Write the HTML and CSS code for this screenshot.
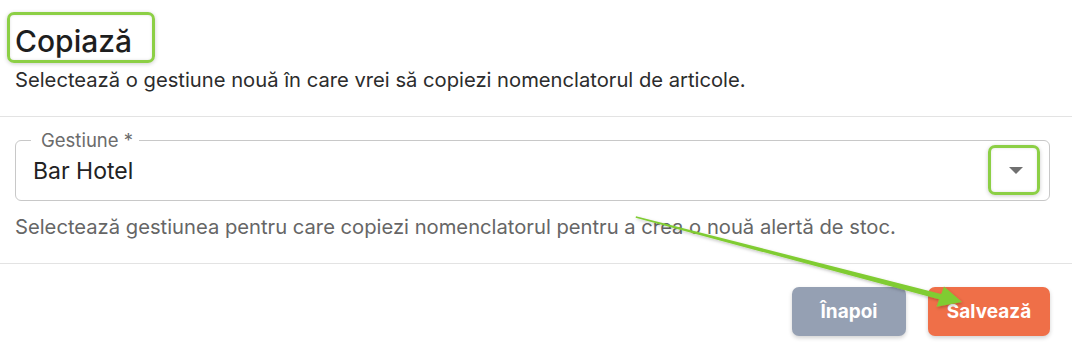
FILE: index.html
```html
<!DOCTYPE html>
<html lang="ro">
<head>
<meta charset="utf-8">
<title>Copiază</title>
<link rel="stylesheet" href="styles.css">
</head>
<body>
<div class="dialog">
  <div class="header">
    <h1 class="title">Copiază</h1>
    <p class="subtitle">Selectează o gestiune nouă în care vrei să copiezi nomenclatorul de articole.</p>
  </div>
  <div class="body">
    <div class="field">
      <span class="label">Gestiune *</span>
      <span class="value">Bar Hotel</span>
      <span class="caret"></span>
    </div>
    <p class="helper">Selectează gestiunea pentru care copiezi nomenclatorul pentru a crea o nouă alertă de stoc.</p>
  </div>
  <div class="footer">
    <button class="btn btn-back">Înapoi</button>
    <button class="btn btn-save">Salvează</button>
  </div>
</div>
<div class="mark mark-title"></div>
<div class="mark mark-caret"></div>
<svg class="arrow" width="1072" height="356" viewBox="0 0 1072 356">
  <defs>
    <filter id="sh" x="-10%" y="-10%" width="120%" height="120%">
      <feDropShadow dx="1" dy="1.5" stdDeviation="1.5" flood-color="#000" flood-opacity="0.25"/>
    </filter>
  </defs>
  <g filter="url(#sh)" fill="#80cc32">
    <polygon points="636,216.2 943,294.4 941.6,300 635.6,217.8"/>
    <polygon points="962,302 936.4,306.8 944,286.4"/>
  </g>
</svg>
</body>
</html>
```
FILE: styles.css
```css
* { box-sizing: border-box; }
html, body { margin: 0; padding: 0; background: #fff; }
body {
  font-family: Inter, "Noto Sans", "Liberation Sans", sans-serif;
  width: 1072px;
  height: 356px;
  overflow: hidden;
  position: relative;
}
.header {
  padding: 22px 22px 24px 15px;
  border-bottom: 1px solid #e3e3e3;
}
.title {
  margin: 0;
  font-size: 30px;
  line-height: 38px;
  font-weight: 500;
  color: #1e1e1e;
}
.subtitle {
  margin: 8px 0 0;
  font-size: 20.2px;
  line-height: 24px;
  color: #2c2c2c;
}
.body {
  padding: 23px 22px 24px 15px;
  border-bottom: 1px solid #e3e3e3;
}
.field {
  position: relative;
  height: 61px;
  border: 1px solid #c8c8c8;
  border-radius: 6px;
  display: flex;
  align-items: center;
  padding: 0 17px;
}
.label {
  position: absolute;
  top: -13px;
  left: 15px;
  padding: 0 6px 0 10px;
  background: #fff;
  font-size: 18.5px;
  line-height: 24px;
  color: #6b6b6b;
}
.value {
  flex: 1;
  font-size: 23px;
  line-height: 28px;
  color: #222;
}
.caret {
  width: 0;
  height: 0;
  border-left: 7px solid transparent;
  border-right: 7px solid transparent;
  border-top: 7px solid #707070;
  margin-right: 9px;
}
.helper {
  margin: 14px 0 0;
  font-size: 20.2px;
  line-height: 24px;
  color: #666;
}
.footer {
  display: flex;
  justify-content: flex-end;
  gap: 22px;
  padding: 23px 22px 0 15px;
}
.btn {
  height: 49px;
  border: none;
  border-radius: 7px;
  font-family: Inter, "Noto Sans", "Liberation Sans", sans-serif;
  font-size: 19px;
  font-weight: 700;
  color: #fff;
  padding: 0;
  text-align: center;
  box-shadow: 0 2px 4px rgba(0,0,0,0.18);
}
.btn-back { background: #95a0b3; width: 114px; }
.btn-save { background: #ef6f48; width: 122px; }
.mark {
  position: absolute;
  border: 3.5px solid #8ccf45;
  border-radius: 7px;
  box-shadow: 0 1px 4px rgba(0,0,0,0.2), inset 0 0 3px rgba(0,0,0,0.12);
}
.mark-title { left: 7px; top: 12px; width: 148px; height: 51px; }
.mark-caret { left: 988px; top: 145px; width: 52px; height: 50px; }
.arrow { position: absolute; left: 0; top: 0; pointer-events: none; }
```
